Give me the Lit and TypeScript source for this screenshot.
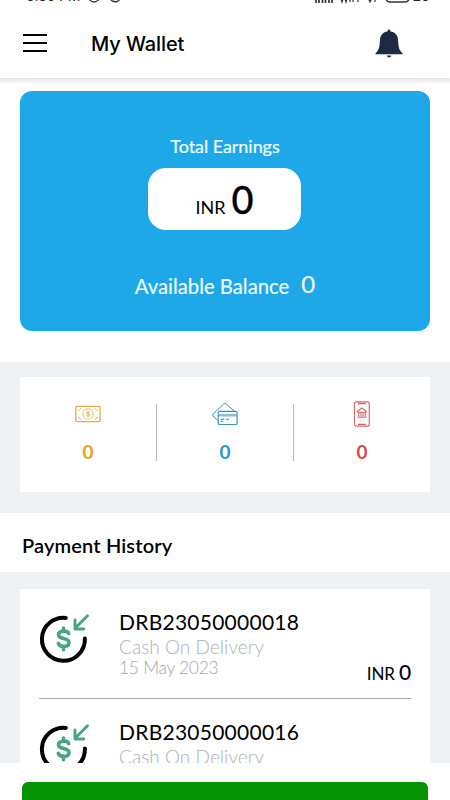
import { LitElement, html, svg, css } from "lit";
import { customElement } from "lit/decorators.js";

const bell = svg`<svg width="28" height="30" viewBox="0 0 28 30">
  <path d="M14 .6c.9 0 1.4.7 1.3 1.7 4.6.8 7.600 4 7.800 8.700.2 6 .7 10.200 4.300 13.100v1.200H.6v-1.200C4.200 21.200 4.700 17 4.900 11c.3-4.700 3.300-7.900 7.800-8.700C12.600 1.300 13.100.6 14 .6z" fill="#1d2a42"/>
  <path d="M11.800 26.600h4.600c-.2 1.100-1.100 1.900-2.300 1.900s-2.100-.8-2.300-1.900z" fill="#1d2a42"/></svg>`;

const cash = svg`<svg width="26" height="32" viewBox="0 0 26 32" fill="none" stroke="#dfb04a">
  <rect x=".8" y="8.300" width="24.300" height="15.400" rx="1.500" stroke-width="1.300"/>
  <g stroke-width=".8"><circle cx="13" cy="16" r="5.200"/>
  <path d="M3 12.500c1.600 0 2.500-.9 2.500-2.300M23 12.500c-1.600 0-2.500-.9-2.500-2.300M3 19.500c1.600 0 2.500.9 2.500 2.300M23 19.500c-1.600 0-2.500.9-2.500 2.300"/></g>
  <path d="M14.600 14.500c-.5-1-3.100-1-3.100.3 0 1.500 3.200.8 3.200 2.400 0 1.400-2.900 1.300-3.400.2M13 12.800v6.400" stroke-width=".9"/></svg>`;

const cards = svg`<svg width="26" height="32" viewBox="0 0 26 32" fill="none" stroke="#3a93b5" stroke-linejoin="round">
  <path d="M5.800 22.500 1 17.900q-.9-.9 0-1.800L11.800 5.900q1.200-1 2.300 0l8.700 7.600" stroke-width="1"/>
  <path d="M6.500 15.900h18.200v2.600H6.500z" fill="#8dbfd2" stroke="none"/>
  <rect x="6.200" y="13.300" width="18.900" height="13.200" rx="1.600" stroke-width="1.200"/>
  <path d="M8.500 21.300h4M14 21.300h3M8.500 23.300h2.800" stroke-width="1.100"/></svg>`;

const phone = svg`<svg width="26" height="32" viewBox="0 0 26 32" fill="none" stroke="#cf6c6e">
  <rect x="5.500" y="3.900" width="14.800" height="24.300" rx="2" stroke-width="1.200"/>
  <path d="M9 5.500h7.800M9 26.500h7.800" stroke-width="1.400"/>
  <path d="M8.500 13.200 12.900 10l4.400 3.200v1H8.500zM9.800 14.500v4M12 14.500v4M14 14.500v4M16.200 14.500v4M8.300 19.200h9.300" stroke-width="1.100"/>
  <path d="M11 22.200h1M13.700 22.200h1" stroke-width=".7"/></svg>`;

const payout = svg`<svg width="52" height="52" viewBox="0 0 52 52" fill="none" stroke-linecap="round" stroke-linejoin="round">
  <path d="M26.800 6.900A21.500 21.500 0 1 0 45.900 27.500" stroke="#000" stroke-width="4"/>
  <g stroke="#4aa382"><path d="M29.700 22.500c-1.200-3.300-10.200-3.300-10.200 1.200 0 5.200 10.500 2.500 10.500 8 0 4.700-9.300 4.800-10.700.7M24.500 17v3.200M24.500 35.200v3.600" stroke-width="3.600"/>
  <path d="M48.500 4.800 36.300 17M36 9v9h8.800" stroke-width="2.900"/></g></svg>`;

const stats = [
  { icon: cash, value: 0, tone: "gold" },
  { icon: cards, value: 0, tone: "blue" },
  { icon: phone, value: 0, tone: "red" },
];

const payments = [
  { id: "DRB23050000018", method: "Cash On Delivery", date: "15 May 2023", amount: 0 },
  { id: "DRB23050000016", method: "Cash On Delivery", date: "15 May 2023", amount: 0 },
];

@customElement("app-root")
export class AppRoot extends LitElement {
  static styles = css`
    :host { display: flex; flex-direction: column; height: 800px; overflow: hidden; background: #fff; color: #000; font-family: Lato, sans-serif; }
    * { box-sizing: border-box; }
    svg { display: block; flex: none; }
    .status { height: 4px; flex: none; display: flex; justify-content: space-between; align-items: flex-end; overflow: hidden; padding: 0 11px 0 26px; font: 14px/16px Inter, sans-serif; color: #222; }
    .status div { display: flex; align-items: flex-end; height: 17px; }
    .time { letter-spacing: -.2px; margin-right: 7px; }
    .header { height: 74px; flex: none; display: flex; align-items: center; padding: 0 47px 0 23px; }
    .menu { width: 24px; height: 18px; display: flex; flex-direction: column; justify-content: space-between; margin-top: 4px; }
    .menu i { height: 2px; background: #000; }
    .title { margin: 5px auto 0 44px; font: 500 20px/24px Inter, sans-serif; letter-spacing: -.1px; }
    .header svg { margin-top: 6px; }
    .main { height: 284px; flex: none; padding: 13px 20px 0; background: linear-gradient(#e5e5e5, #fff 6px); }
    .balance { height: 240px; border-radius: 12px; background: #1fa8e8; color: #effcff; display: flex; flex-direction: column; align-items: center; padding-top: 43px; }
    .label { font-size: 18px; line-height: 24px; -webkit-text-stroke: .2px; letter-spacing: -.05px; }
    .pill { width: 153px; height: 62px; margin: 10px 1px 42px 0; border-radius: 18px; background: #fff; color: #000; display: flex; justify-content: center; align-items: baseline; gap: 6px; font-size: 18px; line-height: 62px; }
    .pill b { font-size: 38px; font-weight: 500; -webkit-text-stroke: .3px #000; }
    .avail { display: flex; gap: 12px; font-size: 20.300px; line-height: 28px; -webkit-text-stroke: .15px; }
    .avail span + span { font-size: 24px; line-height: 24px; }
    .band { background: #edf1f4; padding: 15px 20px 0; height: 151px; flex: none; }
    .stats { background: #fff; height: 115px; display: flex; align-items: flex-start; padding-top: 27px; }
    .stat { flex: 1; height: 57px; display: flex; flex-direction: column; align-items: center; border-right: 1px solid #b9b9b9; font-weight: 700; font-size: 19px; line-height: 24px; }
    .stat:last-child { border: 0; }
    .stat svg { margin: -6px 0 10px; }
    .gold { color: #e5a226; } .blue { color: #2499ce; } .red { color: #d24d50; }
    h2 { height: 59px; flex: none; margin: 0; padding-left: 22px; font-size: 20px; font-weight: 600; line-height: 65px; letter-spacing: .15px; }
    .history { height: 191px; flex: none; overflow: hidden; background: #edf1f4; padding: 17px 20px 0; }
    .list { background: #fff; padding: 0 19px; }
    .row { height: 109.500px; display: flex; border-bottom: 1.300px solid #aaa; padding-top: 22px; }
    .info { margin: -1px 0 0 28px; flex: 1; }
    .id { font-size: 21px; line-height: 24px; letter-spacing: .25px; }
    .method { font-size: 19px; line-height: 26px; color: #b0b0b6; font-weight: 300; letter-spacing: .05px; }
    .date { font-size: 17.500px; line-height: 16px; color: #a5a5ab; font-weight: 300; letter-spacing: -.3px; }
    .amount { align-self: flex-end; font-size: 17px; line-height: 24px; margin-bottom: 12px; letter-spacing: -.15px; }
    .amount b { font-size: 21px; font-weight: 500; }
    .footer { flex: 1; padding: 19px 22px 0; background: #fff; }
    .action { height: 48px; border-radius: 6px; background: #049404; }
  `;

  render() {
    return html`
      <div class="status">
        <div><span class="time">6:30 PM</span>
          <svg width="36" height="16" viewBox="0 0 36 16" fill="none" stroke="#333" stroke-width="1.300"><circle cx="7" cy="8.500" r="5.500"/><path d="M33 11a5.500 5.500 0 0 1-10-1M25 13l4 1 3-1.500"/></svg></div>
        <div><svg width="98" height="16" viewBox="0 0 98 16" fill="none" stroke="#333"><path d="M1 15V12M4 15V11M7.500 15V11M10.500 15V9M14 15V9M17 15V9" stroke-width="1.700"/><path d="m25 8 2 6 2-6 2 6 2-6M35 7v7M38 14V7h3M43 7v7M52 8l3 6 3-6M60 8v6" stroke-width="1.200"/><rect x="71" y="4" width="23" height="10" rx="4" stroke-width="1.600"/></svg><span>26+</span></div>
      </div>
      <div class="header"><div class="menu"><i></i><i></i><i></i></div><div class="title">My Wallet</div>${bell}</div>
      <div class="main"><div class="balance">
        <div class="label">Total Earnings</div>
        <div class="pill"><span>INR</span><b>0</b></div>
        <div class="avail"><span>Available Balance</span><span>0</span></div>
      </div></div>
      <div class="band"><div class="stats">
        ${stats.map((s) => html`<div class="stat ${s.tone}">${s.icon}<span>${s.value}</span></div>`)}
      </div></div>
      <h2>Payment History</h2>
      <div class="history"><div class="list">
        ${payments.map((p) => html`<div class="row">${payout}
          <div class="info"><div class="id">${p.id}</div><div class="method">${p.method}</div><div class="date">${p.date}</div></div>
          <div class="amount">INR <b>${p.amount}</b></div></div>`)}
      </div></div>
      <div class="footer"><div class="action"></div></div>`;
  }
}
